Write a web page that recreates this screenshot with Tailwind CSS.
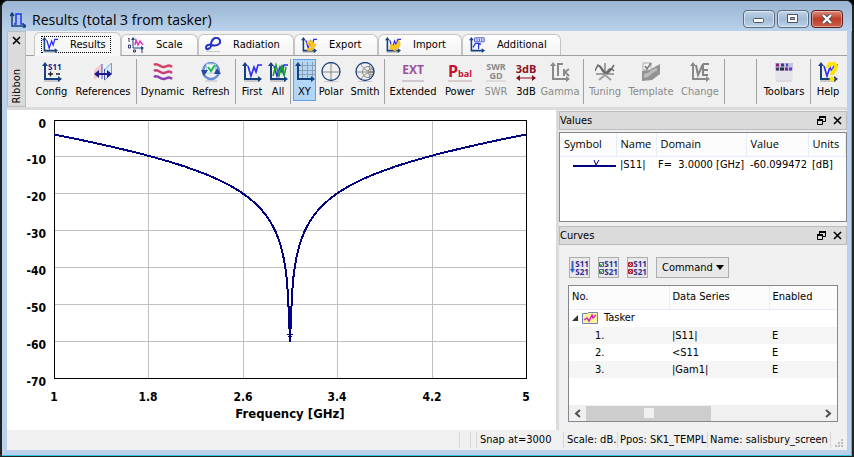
<!DOCTYPE html>
<html lang="en">

<head>
    <meta charset="UTF-8">
    <meta name="viewport" content="width=device-width, initial-scale=1.0">
    <title>Results (total 3 from tasker)</title>
    <script src="https://cdn.jsdelivr.net/npm/@tailwindcss/browser@4"></script>
</head>

<body class="h-screen overflow-hidden bg-black font-['DejaVu_Sans_Condensed','DejaVu_Sans',sans-serif] text-[11px] leading-[14px] text-black">

    <!-- Shared icon parts -->
    <svg class="hidden">
        <symbol id="axes" viewBox="0 0 20 20">
            <path d="M3 3v14h14" fill="none" stroke="#17407f" stroke-width="2" />
            <path d="M0 4l3-4 3 4zM16 14l4 3-4 3z" fill="#17407f" />
        </symbol>
        <symbol id="axes-gray" viewBox="0 0 20 20">
            <path d="M3 3v14h14" fill="none" stroke="#8a8a8a" stroke-width="2" />
            <path d="M0 4l3-4 3 4zM16 14l4 3-4 3z" fill="#8a8a8a" />
        </symbol>
        <symbol id="plot" viewBox="0 0 20 20">
            <rect x="2" y="18" width="16" height="2" fill="#c8c8c8" />
            <use href="#axes" />
            <path d="M6 4l3 10 3-9 2 5 2-7h4" fill="none" stroke="#2b2bff" stroke-width="1.600" />
        </symbol>
        <symbol id="float" viewBox="0 0 9 9">
            <path d="M2.500 3V.5h6v5H6M.5 3.500h5v5h-5z" fill="none" stroke="#000" />
            <path d="M2 1h7M0 4h6" stroke="#000" stroke-width="2" />
        </symbol>
        <symbol id="cross" viewBox="0 0 9 9">
            <path d="M1 1l7 7M8 1L1 8" stroke="#000" stroke-width="1.6" />
        </symbol>
    </svg>

    <div class="flex h-full flex-col rounded-t-lg border-2 border-t border-b border-[#222] bg-[#b9d1ea] px-[5px] pb-[6px] shadow-[inset_0_-1px_#35c4dd,inset_-1px_0_#35c4dd]">

        <!-- Title bar -->
        <header class="-mx-[5px] flex h-[30px] shrink-0 items-center rounded-t-md bg-linear-to-b from-[#9ab4d3] to-[#b9d1ea] pr-[9px] pl-2">
            <svg class="mt-2 size-4" viewBox="0 0 16 16">
                <path d="M2 1v13h14M0 4l2-3 2 3M13 12l3 2-3 2" fill="none" stroke="#174080" stroke-width="1.5" />
                <path d="M4 12h2V2h5v10h3" fill="none" stroke="#2336e8" stroke-width="1.5" />
            </svg>
            <h1 class="mt-2 ml-[6px] flex-1 font-['Open_Sans',sans-serif] text-[14px] leading-5">Results (total 3 from tasker)</h1>
            <div class="mt-[5px] flex gap-[2px]">
                <button aria-label="Minimize" class="grid h-[18px] w-8 place-items-center rounded-sm border border-[#5b6b80] bg-linear-to-b from-[#c0d3e8] via-[#a3bbd6] to-[#bdd3ea] inset-ring inset-ring-white/50">
                    <svg class="mt-1" width="12" height="5"><rect x=".5" y=".5" width="10" height="4" rx="1" fill="#fff" stroke="#4d5360" /></svg>
                </button>
                <button aria-label="Maximize" class="grid h-[18px] w-8 place-items-center rounded-sm border border-[#5b6b80] bg-linear-to-b from-[#c0d3e8] via-[#a3bbd6] to-[#bdd3ea] inset-ring inset-ring-white/50">
                    <svg width="12" height="10"><path d="M.5.5h10v8h-10zM3.500 3.500h4v2h-4z" fill="#fff" fill-rule="evenodd" stroke="#4d5360" /></svg>
                </button>
                <button aria-label="Close" class="grid h-[18px] w-8 place-items-center rounded-sm border border-[#5a1f1a] bg-linear-to-b from-[#dd8a7c] via-[#bd3b24] to-[#c9604c] inset-ring inset-ring-white/40">
                    <svg width="12" height="10" viewBox="0 0 12 10"><path d="M2 1l8 8M10 1L2 9" stroke="#4a4a58" stroke-width="4" /><path d="M2 1l8 8M10 1L2 9" stroke="#fff" stroke-width="2.400" /></svg>
                </button>
            </div>
        </header>

        <!-- Ribbon -->
        <section class="flex h-[76px] shrink-0 bg-[#f0f0f0]">
            <div class="flex w-[19px] flex-col items-center justify-between border border-[#bcbcbc] bg-[#dbdbdb] pt-1 pb-[2px]">
                <button aria-label="Close ribbon"><svg class="size-[9px]"><use href="#cross" /></svg></button>
                <span class="rotate-180 [writing-mode:vertical-rl]">Ribbon</span>
            </div>
            <div class="flex min-w-0 flex-1 flex-col">
                <nav class="flex h-[25px] shrink-0 items-end border-b border-[#a0a0a0] pl-2">
                    <button class="-mb-px flex h-[24px] w-[87px] items-center rounded-t-md border border-b-0 border-[#c4c4c4] bg-[#f7f7f7] pl-[6px]">
                        <span class="flex h-[17px] w-[70px] items-center gap-3 border border-dotted border-black">
                            <svg class="size-4 shrink-0"><use href="#plot" /></svg>Results
                        </span>
                    </button>
                    <button class="flex h-[21px] w-[77px] items-center gap-3 rounded-t-md border border-b-0 border-[#c4c4c4] bg-linear-to-b from-white to-[#f2f2f2] pl-[6px]">
                        <svg class="size-4 shrink-0" viewBox="0 0 16 16">
                            <path d="M5 1v10h10" fill="none" stroke="#174080" /><path d="M3 3l2-3 2 3zM13 9l3 2-3 2z" fill="#174080" />
                            <path d="M7 8l1-5 2 5 2-4 3 4" fill="none" stroke="#e030c0" stroke-width="1.4" />
                            <path d="M0 2l1-1v4M.5 8h2v3h-2zM5.500 13h2v2h-2zM14 12v4" fill="none" stroke="#39396b" />
                        </svg>Scale
                    </button>
                    <button class="flex h-[21px] w-24 items-center gap-3 rounded-t-md border border-b-0 border-[#c4c4c4] bg-linear-to-b from-white to-[#f2f2f2] pl-[6px]">
                        <svg class="size-4 shrink-0" viewBox="0 0 16 16">
                            <rect x="1" y="14" width="14" height="1" fill="#ccc" />
                            <path d="M6 8C6 2 11-1 14 2s0 8-8 6c-6-1-6 5-3 4s3-2 3-4z" fill="none" stroke="#2330c8" stroke-width="2" />
                        </svg>Radiation
                    </button>
                    <button class="flex h-[21px] w-[84px] items-center gap-3 rounded-t-md border border-b-0 border-[#c4c4c4] bg-linear-to-b from-white to-[#f2f2f2] pl-[6px]">
                        <svg class="size-4 shrink-0" viewBox="0 0 20 20"><use href="#plot" /><path d="M7 8c3-5 8-4 9 1h3l-4 6-6-5h3c-1-2-3-2-5-2zM8 14h6v3H8z" fill="#ffc81e" stroke="#f0b010" /></svg>Export
                    </button>
                    <button class="flex h-[21px] w-[84px] items-center gap-3 rounded-t-md border border-b-0 border-[#c4c4c4] bg-linear-to-b from-white to-[#f2f2f2] pl-[6px]">
                        <svg class="size-4 shrink-0" viewBox="0 0 20 20"><use href="#plot" /><path d="M17 4c4 5 1 10-4 11l1 3-8-4 2-6 3 3c3-1 5-3 6-7z" fill="#ffc81e" stroke="#f0b010" /></svg>Import
                    </button>
                    <button class="flex h-[21px] w-[99px] items-center gap-3 rounded-t-md border border-b-0 border-[#c4c4c4] bg-linear-to-b from-white to-[#f2f2f2] pl-[6px]">
                        <svg class="size-4 shrink-0" viewBox="0 0 20 20"><use href="#axes" /><path d="M7 1h12v5H7z" fill="#e6e9ff" stroke="#2b35c8" /><path d="M10 2v3M13 2v3M16 2v3" stroke="#2b35c8" /><path d="M5 13l3-5h4v7M12 8l3 1" fill="none" stroke="#2336e8" stroke-width="1.600" /></svg>Additional
                    </button>
                </nav>

                <div class="flex flex-1 items-start pt-[3px] pl-[7px] *:shrink-0">
                    <button class="flex h-[42px] w-[37px] flex-col items-center justify-between pt-[3px] pb-[2px]">
                        <svg class="size-5 overflow-visible" viewBox="0 0 20 20"><rect x="2" y="18" width="16" height="2" fill="#c8c8c8" /><use href="#axes" /><text x="6" y="8" class="font-['Open_Sans',sans-serif] text-[8px] font-bold" fill="#201a8c">S11</text><path d="M6 12h5M8.500 9.500v5M14 12h4" stroke="#222" stroke-width="1.300" /></svg>Config
                    </button>
                    <button class="flex h-[42px] w-[66px] flex-col items-center justify-between pt-[3px] pb-[2px]">
                        <svg class="size-5" viewBox="0 0 20 20"><path d="M1 8l8-7v11l-8 6z" fill="#f0ccd2" /><path d="M11.500 8l7-7v11l-7 6z" fill="#dcebfa" stroke="#65a0df" /><path d="M9 2v15M11.500 7v11" stroke="#4a56b0" /><path d="M1 12l5-4v3h8V8l5 4-5 4v-3H6v3z" fill="#201a8c" /></svg>References
                    </button>
                    <i class="h-[45px] w-px bg-[#a0a0a0]"></i>
                    <button class="ml-px flex h-[42px] w-[49px] flex-col items-center justify-between pt-[3px] pb-[2px]">
                        <svg class="size-5" viewBox="0 0 20 20"><g fill="none" stroke-width="2.500"><path d="M1 3c4-3 6 3 10 2s5-3 8 0" stroke="#d5405f" /><path d="M1 9c4-3 6 3 10 2s5-3 8 0" stroke="#c83e78" /><path d="M1 15c4-3 6 3 10 2s5-3 8 0" stroke="#8a3cb0" /></g></svg>Dynamic
                    </button>
                    <button class="flex h-[42px] w-12 flex-col items-center justify-between pt-[3px] pb-[2px]">
                        <svg class="size-5" viewBox="0 0 20 20"><path d="M4 19h12" stroke="#bbb" /><circle cx="10" cy="9" r="8" fill="none" stroke="#6a8fd6" stroke-width="2.500" /><path d="M5.500 2h9v9h-9z" fill="#effff2" stroke="#a8cbe0" /><path d="M7 5l3 4 4-6" fill="none" stroke="#19b55c" stroke-width="2" /><path d="M0 8h7l-4 6zM13 12h7l-4-6z" fill="#234a9c" /></svg>Refresh
                    </button>
                    <i class="h-[45px] w-px bg-[#a0a0a0]"></i>
                    <button class="ml-[2px] flex h-[42px] w-7 flex-col items-center justify-between pt-[3px] pb-[2px]">
                        <svg class="size-5"><use href="#plot" /></svg>First
                    </button>
                    <button class="flex h-[42px] w-6 flex-col items-center justify-between pt-[3px] pb-[2px]">
                        <svg class="size-5" viewBox="0 0 20 20"><use href="#plot" /><path d="M5 14l3-11 3 11 3-11 2 11 2-9" fill="none" stroke="#16a02c" stroke-width="1.600" /></svg>All
                    </button>
                    <i class="h-[45px] w-px bg-[#a0a0a0]"></i>
                    <button aria-pressed="true" class="ml-[2px] flex h-[42px] w-[23px] flex-col items-center justify-between border border-[#5aa2ee] bg-[#b3d5f6] pt-[2px] pb-px">
                        <svg class="size-5" viewBox="0 0 20 20"><path d="M7.500 0v16M12.500 0v16M17.500 0v16M4 3.500h16M4 8.500h16M4 12.500h16" stroke="#8c9fb3" /><use href="#axes" /></svg>XY
                    </button>
                    <button class="flex h-[42px] w-[30px] flex-col items-center justify-between pt-[3px] pb-[2px]">
                        <svg class="size-5" viewBox="0 0 20 20"><path d="M3 19.500h14" stroke="#ccc" /><path d="M10 1v18M1 10h18" stroke="#888" /><circle cx="10" cy="9.500" r="9" fill="none" stroke="#1d4481" stroke-width="1.300" /></svg>Polar
                    </button>
                    <button class="flex h-[42px] w-[38px] flex-col items-center justify-between pt-[3px] pb-[2px]">
                        <svg class="size-5" viewBox="0 0 20 20"><path d="M3 19.500h14" stroke="#ccc" /><g fill="none" stroke="#8a8a8a"><path d="M1 10h18M19 10C12 10 7 6 6 2M19 10c-7 0-12 4-13 8M19 10c-4 0-6-5-4-7M19 10c-4 0-6 5-4 7" /><circle cx="13" cy="10" r="5.500" /><circle cx="16" cy="10" r="3" /></g><circle cx="10" cy="9.500" r="9" fill="none" stroke="#1d4481" stroke-width="1.300" /></svg>Smith
                    </button>
                    <i class="h-[45px] w-px bg-[#a0a0a0]"></i>
                    <button class="ml-[2px] flex h-[42px] w-[52px] flex-col items-center justify-between pt-[3px] pb-[2px]">
                        <span class="h-5 border-b-2 border-[#d0c8d0] font-['Open_Sans',sans-serif] text-[12px] leading-[16px] font-bold text-[#9c4f9c]">EXT</span>Extended
                    </button>
                    <button class="flex h-[42px] w-[42px] flex-col items-center justify-between pt-[3px] pb-[2px]">
                        <span class="h-5 border-b-2 border-[#d8cccc] font-['Open_Sans',sans-serif] text-[16px] leading-[18px] font-bold text-[#c8102e]">P<span class="text-[9px]">bal</span></span>Power
                    </button>
                    <button disabled class="flex h-[42px] w-[30px] flex-col items-center justify-between pt-[3px] pb-[2px] text-[#8a8a8a]">
                        <span class="flex h-5 flex-col border-b-2 border-[#dcdcdc] text-center font-['Open_Sans',sans-serif] text-[9px] leading-[9px] font-bold"><span>SWR</span><span>GD</span></span>SWR
                    </button>
                    <button class="flex h-[42px] w-[30px] flex-col items-center justify-between pt-[3px] pb-[2px]">
                        <span class="flex h-5 flex-col items-center font-['Open_Sans',sans-serif] text-[11px] leading-[13px] font-bold text-[#8b1020]">3dB<svg width="20" height="6"><path d="M4 3h12" stroke="#8b1020" /><path d="M0 3l4-3v6zM20 3l-4-3v6z" fill="#8b1020" /></svg></span>3dB
                    </button>
                    <button disabled class="flex h-[42px] w-[38px] flex-col items-center justify-between pt-[3px] pb-[2px] text-[#8a8a8a]">
                        <svg class="size-5" viewBox="0 0 20 20"><use href="#axes-gray" /><path d="M8 14V2h5M14 7v7M19 7l-4 3 4 4" fill="none" stroke="#8a8a8a" stroke-width="2" /></svg>Gamma
                    </button>
                    <i class="ml-1 h-[45px] w-px bg-[#a0a0a0]"></i>
                    <button disabled class="ml-[2px] flex h-[42px] w-[38px] flex-col items-center justify-between pt-[3px] pb-[2px] text-[#8a8a8a]">
                        <svg class="size-5" viewBox="0 0 20 20"><path d="M10 1v13M4 18l6-5 6 5M1 12h18" fill="none" stroke="#a0a0a0" stroke-width="2" /><path d="M0 9c3-8 5-6 8-1s5 5 11-5M2 3c4 0 5 8 8 8s4-8 9-2" fill="none" stroke="#696969" stroke-width="1.500" /></svg>Tuning
                    </button>
                    <button disabled class="flex h-[42px] w-[54px] flex-col items-center justify-between pt-[3px] pb-[2px] text-[#8a8a8a]">
                        <svg class="size-5" viewBox="0 0 20 20"><path d="M1 9l9-2 9-5v10l-8 6-10 1z" fill="#939393" /><path d="M3 12c7-1 6-5 13-6v3c-6 1-6 6-13 7z" fill="#bcbcbc" /><path d="M2 1h8v7H2z" fill="#f7f7f7" stroke="#aaa" /><path d="M4 4l2 3 4-6" fill="none" stroke="#777" stroke-width="1.500" /></svg>Template
                    </button>
                    <button disabled class="flex h-[42px] w-11 flex-col items-center justify-between pt-[3px] pb-[2px] text-[#8a8a8a]">
                        <svg class="size-5" viewBox="0 0 20 20"><use href="#axes-gray" /><path d="M6 3l2 10 5-11v11h5M13 2h6M13 8h5" fill="none" stroke="#858585" stroke-width="2" /></svg>Change
                    </button>
                    <i class="ml-[2px] h-[45px] w-px bg-[#a0a0a0]"></i>
                    <span class="flex-1"></span>
                    <i class="h-[45px] w-px bg-[#a0a0a0]"></i>
                    <button class="ml-[2px] flex h-[42px] w-[50px] flex-col items-center justify-between pt-[3px] pb-[2px]">
                        <svg class="size-5" viewBox="0 0 20 20"><path d="M1 9h18v9H1z" fill="#e4e4ea" /><path d="M1 1h18v8H1z" fill="#c4c5dd" /><path d="M2 3h3M11 7h3" stroke="#8b1e86" stroke-width="3" /><path d="M7 3h3M2 7h3" stroke="#3c3c68" stroke-width="3" /><path d="M12 3h2M15 7h3" stroke="#4f45d0" stroke-width="3" /><path d="M6 7h4" stroke="#27303e" stroke-width="3" /><path d="M2 19h16" stroke="#c8c8c8" /></svg>Toolbars
                    </button>
                    <i class="ml-px h-[45px] w-px bg-[#a0a0a0]"></i>
                    <button class="mr-1 ml-[2px] flex h-[42px] w-[30px] flex-col items-center justify-between pt-[3px] pb-[2px]">
                        <svg class="size-5" viewBox="0 0 20 20"><use href="#plot" /><path d="M10 6c0-6 8-6 8-1 0 4-4 3-4 8" fill="none" stroke="#ffe600" stroke-width="4" /><circle cx="14" cy="17" r="2.500" fill="#ffe600" /></svg>Help
                    </button>
                </div>
            </div>
        </section>

        <!-- Chart and docked panels -->
        <main class="flex min-h-0 flex-1 border-t-[3px] border-[#dbdbdb] bg-[#f0f0f0]">
            <div class="min-w-0 flex-1 bg-white">
                <svg class="h-full w-full" viewBox="0 0 549 320" preserveAspectRatio="xMidYMin" shape-rendering="crispEdges">
                    <g id="grid" stroke="#c0c0c0"></g>
                    <path d="M47.500 10.500h472v258h-472z" fill="none" stroke="#000" />
                    <path id="curve" fill="none" stroke="#000080" stroke-width="2" />
                    <path d="M280 224h6M281 226h4" fill="none" stroke="#000080" />
                    <g id="labels" class="font-['DejaVu_Sans_Condensed','DejaVu_Sans',sans-serif] text-[12px] font-bold"></g>
                    <text x="283" y="308" text-anchor="middle" class="font-['DejaVu_Sans_Condensed','DejaVu_Sans',sans-serif] text-[13px] font-bold">Frequency [GHz]</text>
                </svg>
            </div>

            <aside class="flex w-[291px] shrink-0 flex-col border-l-[3px] border-[#dbdbdb] pt-px">
                <section class="pb-[4px]">
                    <div class="flex h-[19px] items-center gap-[7px] border border-[#bcbcbc] bg-[#dbdbdb] pr-[4px]">
                        <h2 class="flex-1">Values</h2>
                        <button aria-label="Float values"><svg class="size-[9px]"><use href="#float" /></svg></button>
                        <button aria-label="Close values"><svg class="size-[9px]"><use href="#cross" /></svg></button>
                    </div>
                    <div class="mt-[2px] h-[90px] border border-[#828790] bg-white">
                        <table class="w-full table-fixed text-left whitespace-nowrap">
                            <thead class="font-['Open_Sans',sans-serif]">
                                <tr class="h-[23px] *:border-b *:border-[#e5eefa] *:bg-[#fcfcfc] *:font-normal">
                                    <th class="w-14 border-r pl-1">Symbol</th>
                                    <th class="w-10 border-r pl-1">Name</th>
                                    <th class="w-[90px] border-r pl-1">Domain</th>
                                    <th class="w-[62px] border-r pl-1">Value</th>
                                    <th class="border-r pl-1">Units</th>
                                </tr>
                            </thead>
                            <tbody>
                                <tr class="h-[17px]">
                                    <td class="pl-[13px]"><svg width="43" height="11"><path d="M0 7h43" stroke="#000080" stroke-width="2" /><path d="M21 1l2 5 3-5" fill="none" stroke="#000080" /></svg></td>
                                    <td class="pl-1">|S11|</td>
                                    <td class="pl-[2px] whitespace-pre">F=  3.0000 [GHz]</td>
                                    <td class="pl-1">-60.099472</td>
                                    <td class="pl-1">[dB]</td>
                                </tr>
                            </tbody>
                        </table>
                    </div>
                </section>

                <section class="flex min-h-0 flex-1 flex-col">
                    <div class="flex h-[19px] shrink-0 items-center gap-[7px] border border-[#bcbcbc] bg-[#dbdbdb] pr-[4px]">
                        <h2 class="flex-1">Curves</h2>
                        <button aria-label="Float curves"><svg class="size-[9px]"><use href="#float" /></svg></button>
                        <button aria-label="Close curves"><svg class="size-[9px]"><use href="#cross" /></svg></button>
                    </div>
                    <div class="flex h-10 shrink-0 items-end gap-2 px-[10px] pb-[7px]">
                        <button aria-label="Sort curves" class="flex size-[21px] items-center justify-center border border-[#adadad] bg-[#e8e8e8]">
                            <svg width="5" height="14"><path d="M2.500 0v9" stroke="#2a66cc" stroke-width="2" /><path d="M0 8h5l-2.500 4z" fill="#2a66cc" /></svg>
                            <span class="font-['Open_Sans',sans-serif] text-[8px] leading-[8px] font-bold text-[#2d2a94]">S11<br>S21</span>
                        </button>
                        <button aria-label="Enable curves" class="flex size-[21px] items-center justify-center border border-[#adadad] bg-[#e8e8e8]">
                            <svg width="5" height="14"><path d="M.5 1.500h4v4h-4zM.5 8.500h4v4h-4z" fill="#fff" stroke="#45618d" /><path d="M1 3l1 2 3-4M1 10l1 2 3-4" fill="none" stroke="#1c9b3c" /></svg>
                            <span class="font-['Open_Sans',sans-serif] text-[8px] leading-[8px] font-bold text-[#2d2a94]">S11<br>S21</span>
                        </button>
                        <button aria-label="Disable curves" class="flex size-[21px] items-center justify-center border border-[#adadad] bg-[#e8e8e8]">
                            <svg width="5" height="14"><path d="M.5 1.500h4v4h-4zM.5 8.500h4v4h-4z" fill="#ffdada" stroke="#b32433" /><path d="M1 2l3 3M4 2L1 5M1 9l3 3M4 9l-3 3" stroke="#d8152a" /></svg>
                            <span class="font-['Open_Sans',sans-serif] text-[8px] leading-[8px] font-bold text-[#2d2a94]">S11<br>S21</span>
                        </button>
                        <button class="flex h-[21px] w-[73px] items-center gap-[3px] border border-[#adadad] bg-[#e8e8e8] pl-[5px]">Command<svg width="8" height="5"><path d="M0 0h8l-4 5z" /></svg></button>
                    </div>
                    <div class="mx-[9px] mb-2 flex min-h-0 flex-1 flex-col border border-[#828790] bg-white">
                        <table class="w-full table-fixed text-left whitespace-nowrap">
                            <thead>
                                <tr class="h-[23px] *:border-b *:border-[#e5eefa] *:bg-[#fcfcfc] *:font-normal">
                                    <th class="w-[100px] border-r pl-[3px]">No.</th>
                                    <th class="w-[100px] border-r pl-[3px]">Data Series</th>
                                    <th class="pl-[3px]">Enabled</th>
                                </tr>
                            </thead>
                            <tbody>
                                <tr class="h-[18px]">
                                    <td colspan="3" class="pl-[3px]">
                                        <div class="flex items-center">
                                            <svg width="6" height="6"><path d="M6 0v6H0z" fill="#333" /></svg>
                                            <svg class="mr-[6px] ml-1" width="16" height="13"><path d="M.5 1.500h5l1-1h9v11H.5z" fill="#fff49b" stroke="#6c87b5" /><path d="M2 8l3-2 2 3 3-6 1 3 3-3" fill="none" stroke="#d91ebc" stroke-width="1.400" /></svg>
                                            Tasker
                                        </div>
                                    </td>
                                </tr>
                                <tr class="h-[17px] bg-[#f5f5f5]"><td class="pl-[26px]">1.</td><td class="pl-[3px]">|S11|</td><td class="pl-[3px]">E</td></tr>
                                <tr class="h-[17px]"><td class="pl-[26px]">2.</td><td class="pl-[3px]">&lt;S11</td><td class="pl-[3px]">E</td></tr>
                                <tr class="h-[17px] bg-[#f5f5f5]"><td class="pl-[26px]">3.</td><td class="pl-[3px]">|Gam1|</td><td class="pl-[3px]">E</td></tr>
                            </tbody>
                        </table>
                        <div class="mt-auto flex h-4 items-center bg-[#f0f0f0] px-[5px]">
                            <svg width="7" height="9"><path d="M6 1L2 4.500 6 8" fill="none" stroke="#505050" stroke-width="2" /></svg>
                            <div class="ml-[5px] grid h-[15px] w-[125px] place-items-center bg-[#cdcdcd]"><i class="size-[10px] bg-[#f0f0f0]"></i></div>
                            <svg class="ml-auto" width="7" height="9"><path d="M1 1l4 3.500L1 8" fill="none" stroke="#505050" stroke-width="2" /></svg>
                        </div>
                    </div>
                </section>
            </aside>
        </main>

        <!-- Status bar -->
        <footer class="flex h-5 shrink-0 items-center justify-end bg-[#f0f0f0] whitespace-nowrap *:h-4 *:border-l *:border-[#d7d7d7] *:leading-[16px]">
            <span class="w-[11px]"></span>
            <span class="w-[6px]"></span>
            <span class="w-[87px] pl-[3px]">Snap at=3000</span>
            <span class="w-[54px] pl-[3px]">Scale: dB.</span>
            <span class="w-[90px] pl-[2px]">Ppos: SK1_TEMPL</span>
            <span class="w-[123px] pl-[2px]">Name: salisbury_screen</span>
            <span class="flex w-[17px] items-end justify-end pr-[3px]">
                <svg width="9" height="9" fill="#bcbcbc"><path d="M6 0h2v2H6zM3 3h2v2H3zM6 3h2v2H6zM0 6h2v2H0zM3 6h2v2H3zM6 6h2v2H6z" /></svg>
            </span>
        </footer>
    </div>

    <script>
        // Plot area inside the svg
        const left = 47, top0 = 10, width = 472, height = 258;
        const xMin = 1, xMax = 5, yMin = -70;

        const toX = (f) => left + (f - xMin) / (xMax - xMin) * width;
        const toY = (db) => top0 + db / yMin * height;

        // Reflection of a quarter-wave absorber screen, in dB
        const s11 = (f) => {
            const cot = Math.abs(1 / Math.tan(Math.PI * f / 6));
            return Math.max(-60.1, 20 * Math.log10(cot / Math.hypot(2.1, cot)));
        };

        let grid = '';
        let labels = '';
        for (let db = 0; db >= yMin; db -= 10) {
            const y = Math.floor(toY(db));
            if (db < 0 && db > yMin) grid += `<path d="M${left} ${y + 0.5}h${width}"/>`;
            labels += `<text x="39" y="${y + 8}" text-anchor="end">${db}</text>`;
        }
        [1, 1.8, 2.6, 3.4, 4.2, 5].forEach((f) => {
            const x = Math.round(toX(f));
            if (f > xMin && f < xMax) grid += `<path d="M${x + 0.5} ${top0 + 1}v${height}"/>`;
            labels += `<text x="${x}" y="291" text-anchor="middle">${f}</text>`;
        });
        document.getElementById('grid').innerHTML = grid;
        document.getElementById('labels').innerHTML = labels;

        const points = [];
        for (let i = 0; i <= 400; i++) {
            const f = xMin + i * 0.01;
            points.push(`${toX(f).toFixed(1)} ${toY(s11(f)).toFixed(1)}`);
        }
        document.getElementById('curve').setAttribute('d', 'M' + points.join('L'));
    </script>
</body>

</html>
